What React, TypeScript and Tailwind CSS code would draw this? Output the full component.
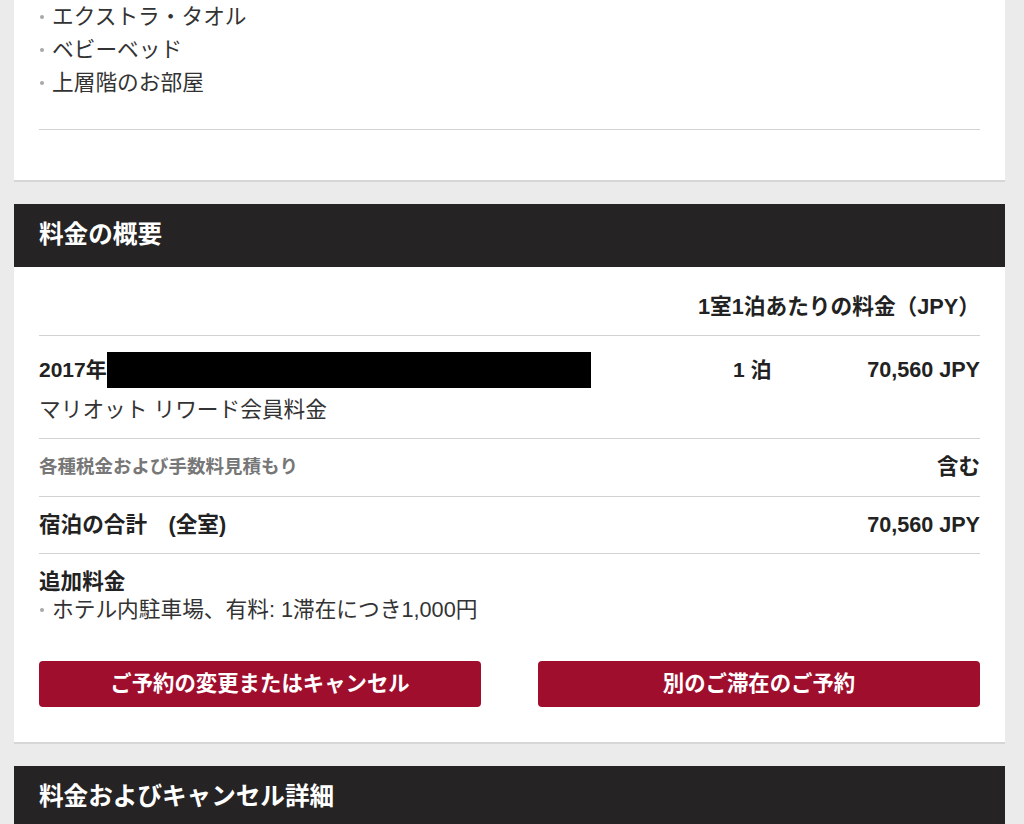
import React from "react";

const font = { fontFamily: '"Liberation Sans", "Noto Sans CJK JP", sans-serif' };

function Bullet({ children }: { children: React.ReactNode }) {
  return (
    <li className="flex items-center">
      <span className="ml-[1px] mr-[8px] h-[4px] w-[4px] shrink-0 rounded-full bg-[#a8a8a8]" />
      <span>{children}</span>
    </li>
  );
}

function SectionHeader({ title }: { title: string }) {
  return (
    <div className="flex h-[63px] items-center bg-[#252324] px-[25px]">
      <h2 className="text-[24.6px] font-bold text-white">{title}</h2>
    </div>
  );
}

export default function App() {
  return (
    <div style={font} className="h-[824px] overflow-hidden bg-[#ebebeb] pl-[14px] pr-[19px] text-[#222]">
      {/* amenities card, scrolled so only its tail is visible */}
      <section className="border-b-2 border-[#d6d6d6] bg-white px-[25px] pb-[50px]">
        <ul className="text-[21.7px] leading-[33px] text-[#333]">
          <Bullet>エクストラ・タオル</Bullet>
          <Bullet>ベビーベッド</Bullet>
          <Bullet>上層階のお部屋</Bullet>
        </ul>
        <div className="mt-[30px] h-px bg-[#d2d2d2]" />
      </section>

      {/* rate summary */}
      <section className="mt-[22px] border-b-2 border-[#d6d6d6] bg-white">
        <SectionHeader title="料金の概要" />
        <div className="px-[25px] pb-[35px]">
          <div className="border-b border-[#d2d2d2] pb-[16px] pt-[28px] text-right text-[21.7px] font-bold leading-[24px]">
            1室1泊あたりの料金（JPY）
          </div>

          <div className="border-b border-[#d2d2d2] pb-[14px] pt-[16px]">
            <div className="flex h-[36px] items-center text-[21px] font-bold">
              <div className="flex w-[694px] shrink-0 items-center">
                <span>2017年</span>
                <span className="inline-block h-[36px] w-[484px] bg-black" />
              </div>
              <div>1 泊</div>
              <div className="flex-1 text-right text-[21.6px]">70,560 JPY</div>
            </div>
            <div className="mt-[8px] text-[21.7px] leading-[28px] text-[#333]">マリオット リワード会員料金</div>
          </div>

          <div className="flex items-center justify-between border-b border-[#d2d2d2] pb-[17px] pt-[16px] leading-[24px]">
            <span className="text-[18.5px] font-bold text-[#777]">各種税金および手数料見積もり</span>
            <span className="text-[21.5px] font-bold">含む</span>
          </div>

          <div className="flex items-center justify-between border-b border-[#d2d2d2] py-[16px] text-[21.6px] font-bold leading-[24px]">
            <span>宿泊の合計　(全室)</span>
            <span>70,560 JPY</span>
          </div>

          <div className="pt-[14px]">
            <div className="text-[21.6px] font-bold leading-[28px]">追加料金</div>
            <ul className="text-[21.7px] leading-[28px] text-[#333]">
              <Bullet>ホテル内駐車場、有料: 1滞在につき1,000円</Bullet>
            </ul>
          </div>

          <div className="mt-[37px] grid grid-cols-2 gap-[57px]">
            <button className="h-[46px] rounded-[4px] bg-[#a00e2e] text-[21.4px] font-bold text-white">
              ご予約の変更またはキャンセル
            </button>
            <button className="h-[46px] rounded-[4px] bg-[#a00e2e] text-[21.4px] font-bold text-white">
              別のご滞在のご予約
            </button>
          </div>
        </div>
      </section>

      {/* cancellation details */}
      <section className="mt-[22px] bg-white">
        <SectionHeader title="料金およびキャンセル詳細" />
      </section>
    </div>
  );
}
